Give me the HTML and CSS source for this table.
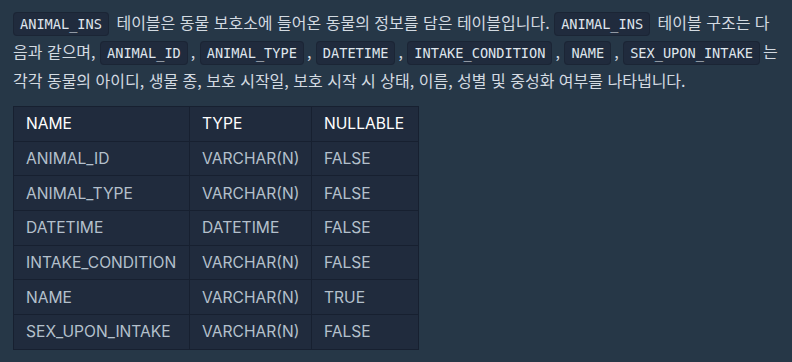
FILE: index.html
```html
<!DOCTYPE html>
<html lang="ko">
<head>
<meta charset="utf-8">
<link rel="stylesheet" href="styles.css">
</head>
<body>
<div class="desc">
<p class="intro"><code>ANIMAL_INS</code> 테이블은 동물 보호소에 들어온 동물의 정보를 담은 테이블입니다. <code>ANIMAL_INS</code> 테이블 구조는 다음과 같으며, <code>ANIMAL_ID</code>, <code>ANIMAL_TYPE</code>, <code>DATETIME</code>, <code>INTAKE_CONDITION</code>, <code>NAME</code>, <code>SEX_UPON_INTAKE</code>는 각각 동물의 아이디, 생물 종, 보호 시작일, 보호 시작 시 상태, 이름, 성별 및 중성화 여부를 나타냅니다.</p>
<table class="schema">
<colgroup><col class="c1"><col class="c2"><col class="c3"></colgroup>
<thead>
<tr><th>NAME</th><th>TYPE</th><th>NULLABLE</th></tr>
</thead>
<tbody>
<tr><td>ANIMAL_ID</td><td>VARCHAR(N)</td><td>FALSE</td></tr>
<tr><td>ANIMAL_TYPE</td><td>VARCHAR(N)</td><td>FALSE</td></tr>
<tr><td>DATETIME</td><td>DATETIME</td><td>FALSE</td></tr>
<tr><td>INTAKE_CONDITION</td><td>VARCHAR(N)</td><td>FALSE</td></tr>
<tr><td>NAME</td><td>VARCHAR(N)</td><td>TRUE</td></tr>
<tr><td>SEX_UPON_INTAKE</td><td>VARCHAR(N)</td><td>FALSE</td></tr>
</tbody>
</table>
</div>
</body>
</html>
```
FILE: styles.css
```css
html, body {
  margin: 0;
  background: #263747;
}
body {
  padding: 8px 13.5px 8px 13px;
  font-family: "Noto Sans CJK KR", "Noto Sans", sans-serif;
  color: #d3dae1;
}
.intro {
  margin: 0 0 11px;
  font-size: 16px;
  line-height: 29px;
}
code {
  font-family: "DejaVu Sans Mono", monospace;
  font-size: 13.62px;
  line-height: 1;
  background: #202b3d;
  border: 1px solid #1b2535;
  border-radius: 4px;
  padding: 3px 6px;
  margin: 0 3px 0 0;
  color: #dfe5ec;
}
.schema {
  border-collapse: collapse;
  table-layout: fixed;
  width: 405px;
  background: #202b3d;
  font-family: "Inter", "Noto Sans", sans-serif;
  font-size: 15.6px;
}
.c1 { width: 176px; }
.c2 { width: 122px; }
.c3 { width: 107px; }
.schema th, .schema td {
  border: 1px solid #172030;
  padding: 0 12px;
  height: 33.7px;
  text-align: left;
  white-space: nowrap;
}
.schema th {
  color: #ffffff;
  font-weight: 400;
}
.schema td {
  color: #b4c0cc;
}
```
